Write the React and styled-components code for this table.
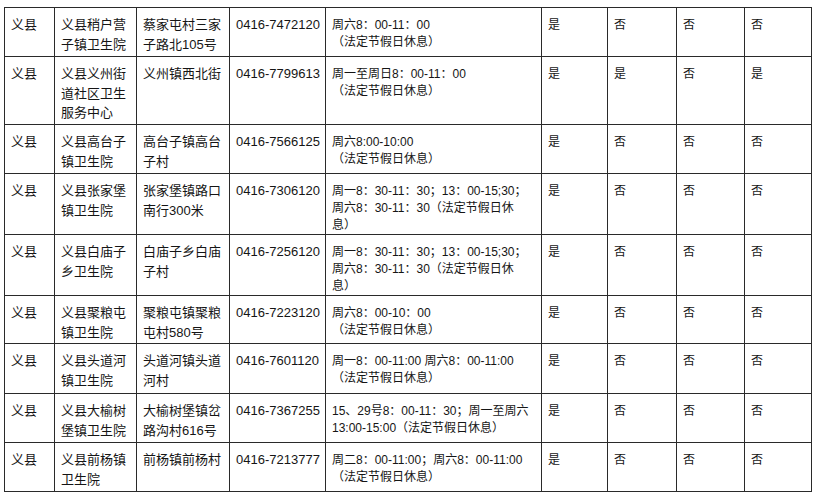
import React from "react";
import styled, { createGlobalStyle } from "styled-components";

const Global = createGlobalStyle`
  html, body { margin: 0; padding: 0; background: #fff; }
  body { font-family: "Liberation Sans", "Noto Sans CJK SC", sans-serif; color: #151515; }
`;

const Page = styled.div`
  padding: 7px 0 0 4px;
  width: 813px;
  height: 492px;
  box-sizing: border-box;
  overflow: hidden;
`;

const Table = styled.table`
  border-collapse: collapse;
  table-layout: fixed;
  width: 807px;
`;

const Row = styled.tr`
  height: ${(p) => p.$h}px;
`;

const Cell = styled.td`
  border: 1px solid #2a2a2a;
  vertical-align: top;
  padding: ${(p) => (p.$kind === "time" || p.$kind === "flag" ? "9px 4px 0 6px" : "7px 4px 0 6px")};
  font-size: ${(p) => (p.$kind === "time" || p.$kind === "flag" ? "12px" : "13px")};
  line-height: ${(p) => (p.$kind === "time" || p.$kind === "flag" ? "17px" : "19.5px")};
  white-space: ${(p) => (p.$kind === "tel" ? "nowrap" : "normal")};
  box-sizing: border-box;
  word-break: break-all;
`;

const Line = styled.div`
  white-space: nowrap;
`;

const widths = [50, 82, 93, 96, 216, 66, 69, 68, 67];

const rows = [
  { h: 49, name: "义县稍户营子镇卫生院", addr: "蔡家屯村三家子路北105号", tel: "0416-7472120", time: ["周六8：00-11：00", "（法定节假日休息）"], f: ["是", "否", "否", "否"] },
  { h: 68, name: "义县义州街道社区卫生服务中心", addr: "义州镇西北街", tel: "0416-7799613", time: ["周一至周日8：00-11：00", "（法定节假日休息）"], f: ["是", "是", "否", "是"] },
  { h: 49, name: "义县高台子镇卫生院", addr: "高台子镇高台子村", tel: "0416-7566125", time: ["周六8:00-10:00", "（法定节假日休息）"], f: ["是", "否", "否", "否"] },
  { h: 60, name: "义县张家堡镇卫生院", addr: "张家堡镇路口南行300米", tel: "0416-7306120", time: ["周一8：30-11：30；13：00-15;30；", "周六8：30-11：30（法定节假日休", "息）"], f: ["是", "否", "否", "否"] },
  { h: 61, name: "义县白庙子乡卫生院", addr: "白庙子乡白庙子村", tel: "0416-7256120", time: ["周一8：30-11：30；13：00-15;30；", "周六8：30-11：30（法定节假日休", "息）"], f: ["是", "否", "否", "否"] },
  { h: 48, name: "义县聚粮屯镇卫生院", addr: "聚粮屯镇聚粮屯村580号", tel: "0416-7223120", time: ["周六8：00-10：00", "（法定节假日休息）"], f: ["是", "否", "否", "否"] },
  { h: 50, name: "义县头道河镇卫生院", addr: "头道河镇头道河村", tel: "0416-7601120", time: ["周一8：00-11:00 周六8：00-11:00", "（法定节假日休息）"], f: ["是", "否", "否", "否"] },
  { h: 49, name: "义县大榆树堡镇卫生院", addr: "大榆树堡镇岔路沟村616号", tel: "0416-7367255", time: ["15、29号8：00-11：30；周一至周六", "13:00-15:00（法定节假日休息）"], f: ["是", "否", "否", "否"] },
  { h: 49, name: "义县前杨镇卫生院", addr: "前杨镇前杨村", tel: "0416-7213777", time: ["周二8：00-11:00；周六8：00-11:00", "（法定节假日休息）"], f: ["是", "否", "否", "否"] },
];

export default function App() {
  return (
    <>
      <Global />
      <Page>
        <Table>
          <colgroup>
            {widths.map((w, i) => (
              <col key={i} style={{ width: w }} />
            ))}
          </colgroup>
          <tbody>
            {rows.map((r, i) => (
              <Row key={i} $h={r.h}>
                <Cell>义县</Cell>
                <Cell>{r.name}</Cell>
                <Cell>{r.addr}</Cell>
                <Cell $kind="tel">{r.tel}</Cell>
                <Cell $kind="time">
                  {r.time.map((t, j) => (
                    <Line key={j}>{t}</Line>
                  ))}
                </Cell>
                {r.f.map((f, j) => (
                  <Cell key={j} $kind="flag">{f}</Cell>
                ))}
              </Row>
            ))}
          </tbody>
        </Table>
      </Page>
    </>
  );
}
